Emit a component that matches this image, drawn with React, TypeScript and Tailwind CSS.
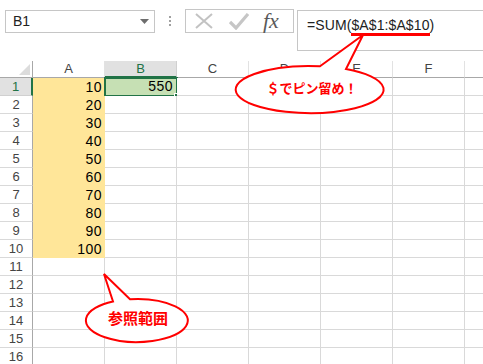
import React from 'react'

const COLS = ['A', 'B', 'C', 'D', 'E', 'F', 'G']
const ROWS = Array.from({ length: 16 }, (_, i) => i + 1)

const Toolbar = () => (
  <div className="flex h-[61px] items-start bg-white">
    {/* Name box */}
    <div className="ml-[5px] mt-[10px] flex h-[23px] w-[150px] items-center justify-between border border-[#c6c6c6] pl-[7px] pr-[5px] text-[14px] text-[#222]">
      <span>B1</span>
      <svg width="9" height="5" viewBox="0 0 9 5">
        <path d="M0 0 L9 0 L4.5 5 Z" fill="#6d6d6d" />
      </svg>
    </div>

    {/* grip dots */}
    <div className="ml-[14px] mt-[16px] flex flex-col gap-[2px]">
      <span className="h-[2px] w-[2px] bg-[#a0a0a0]" />
      <span className="h-[2px] w-[2px] bg-[#a0a0a0]" />
      <span className="h-[2px] w-[2px] bg-[#a0a0a0]" />
    </div>

    {/* cancel / enter / fx */}
    <div className="ml-[14px] mt-[9px] flex h-[24px] w-[109px] items-center border border-[#c6c6c6]">
      <svg className="ml-[9px]" width="18" height="16" viewBox="0 0 18 16">
        <path d="M1 1 L17 15 M17 1 L1 15" stroke="#c2c2c2" strokeWidth="2" fill="none" />
      </svg>
      <svg className="ml-[16px]" width="20" height="17" viewBox="0 0 20 17">
        <path d="M1 9 L7 15 L19 1" stroke="#c6c6c6" strokeWidth="3.2" fill="none" />
      </svg>
      <span className="ml-[14px] -mt-[1px] font-['Liberation_Serif',serif] text-[22px] italic leading-none text-[#5a5a5a]">
        fx
      </span>
    </div>

    {/* formula bar */}
    <div className="ml-[3px] mt-[10px] h-[41px] flex-1 border border-r-0 border-[#c6c6c6] pl-[9px] pt-[7px] text-[14px] leading-none tracking-[0.1px] text-[#222]">
      =SUM(
      <span className="inline-block border-b-[3px] border-[#ff0000] pb-[1px]">$A$1:$A$10</span>)
    </div>
  </div>
)

const Grid = () => (
  <div className="flex flex-col">
    {/* header row */}
    <div className="flex h-[17px]">
      <div className="relative h-[17px] w-[33px] shrink-0 border-r border-b border-[#a8a8a8] bg-white">
        <svg className="absolute right-[2px] bottom-[2px]" width="11" height="11" viewBox="0 0 11 11">
          <path d="M11 0 L11 11 L0 11 Z" fill="#dcdcdc" />
        </svg>
      </div>
      {COLS.map((c) => (
        <div
          key={c}
          className={`flex h-[17px] w-[72px] shrink-0 items-center justify-center text-[13px] ${
            c === 'B'
              ? 'border-r border-r-[#d0d0d0] border-b-2 border-b-[#217346] bg-[#e1e1e1] text-[#217346]'
              : 'border-r border-r-[#e2e2e2] border-b border-b-[#a8a8a8] bg-white text-[#444]'
          }`}
        >
          {c === 'G' ? '' : c}
        </div>
      ))}
    </div>

    {ROWS.map((r) => (
      <div key={r} className="flex h-[18px]">
        <div
          className={`flex h-[18px] w-[33px] shrink-0 items-center justify-center text-[13px] ${
            r === 1
              ? 'border-r-2 border-r-[#217346] border-b border-b-[#d0d0d0] bg-[#e1e1e1] text-[#217346]'
              : 'border-r border-r-[#a8a8a8] border-b border-b-[#d9d9d9] bg-white text-[#444]'
          }`}
        >
          {r}
        </div>
        {COLS.map((c) => {
          const inA = c === 'A' && r <= 10
          const isB1 = c === 'B' && r === 1
          return (
            <div
              key={c}
              className={`relative flex h-[18px] w-[72px] shrink-0 items-end justify-end pr-[3px] pb-[2px] text-[14px] leading-none tracking-[0.5px] text-black ${
                inA
                  ? 'bg-[#ffe699]'
                  : isB1
                    ? 'border-r border-b border-[#d9d9d9] bg-[#c6e0b4]'
                    : 'border-r border-b border-[#d9d9d9] bg-white'
              }`}
            >
              {inA && r * 10}
              {isB1 && (
                <>
                  550
                  <div className="absolute -top-[1px] -left-[1px] h-[20px] w-[74px] border-2 border-[#217346]" />
                  <div className="absolute -right-[4px] -bottom-[4px] h-[6px] w-[6px] border border-white bg-[#217346]" />
                </>
              )}
            </div>
          )
        })}
      </div>
    ))}
  </div>
)

const Callouts = () => (
  <svg className="pointer-events-none absolute top-0 left-0" width="483" height="364" viewBox="0 0 483 364">
    <path
      d="M320 66.3 L363 35 L346 69.1 A74 23.5 0 1 1 320 66.3 Z"
      fill="white"
      stroke="#ff0000"
      strokeWidth="2"
    />
    <text
      x="312"
      y="93"
      textAnchor="middle"
      fill="#ff0000"
      fontSize="13"
      fontWeight="700"
      fontFamily="'Noto Sans CJK JP', sans-serif"
    >
      ＄でピン留め！
    </text>
    <path
      d="M113 301.5 L104 274 L130 299.2 A51 21.5 0 1 1 113 301.5 Z"
      fill="white"
      stroke="#ff0000"
      strokeWidth="2"
    />
    <text
      x="138"
      y="324"
      textAnchor="middle"
      fill="#ff0000"
      fontSize="15"
      fontWeight="700"
      fontFamily="'Noto Sans CJK JP', sans-serif"
    >
      参照範囲
    </text>
  </svg>
)

export default function App() {
  return (
    <div className="relative h-[364px] w-[483px] overflow-hidden bg-white font-['Liberation_Sans','Noto_Sans_CJK_JP',sans-serif]">
      <Toolbar />
      <Grid />
      <Callouts />
    </div>
  )
}
